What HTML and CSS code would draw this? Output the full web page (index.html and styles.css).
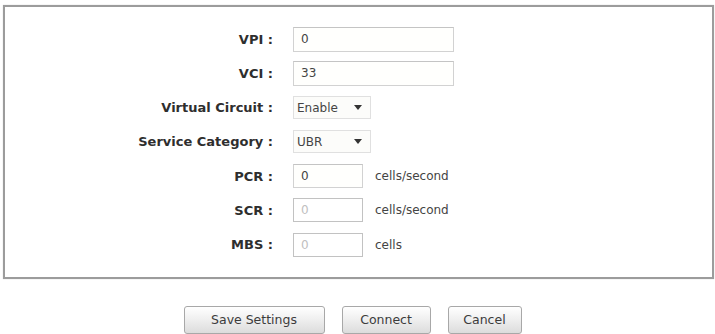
FILE: index.html
```html
<!DOCTYPE html>
<html>
<head>
<meta charset="utf-8">
<link rel="stylesheet" href="styles.css">
</head>
<body>
<div class="panel">
  <div class="form">
    <div class="label">VPI :</div>
    <div class="field"><div class="input wide">0</div></div>

    <div class="label">VCI :</div>
    <div class="field"><div class="input wide">33</div></div>

    <div class="label">Virtual Circuit :</div>
    <div class="field"><div class="select"><span>Enable</span><i class="arrow"></i></div></div>

    <div class="label">Service Category :</div>
    <div class="field"><div class="select"><span>UBR</span><i class="arrow"></i></div></div>

    <div class="label">PCR :</div>
    <div class="field"><div class="input short">0</div><span class="unit">cells/second</span></div>

    <div class="label">SCR :</div>
    <div class="field"><div class="input short disabled">0</div><span class="unit">cells/second</span></div>

    <div class="label">MBS :</div>
    <div class="field"><div class="input short disabled">0</div><span class="unit">cells</span></div>
  </div>
</div>
<div class="buttons">
  <button class="btn save">Save Settings</button>
  <button class="btn connect">Connect</button>
  <button class="btn cancel">Cancel</button>
</div>
</body>
</html>
```

FILE: styles.css
```css
html, body {
  margin: 0;
  padding: 0;
  background: #ffffff;
}

body {
  font-family: "DejaVu Sans", Verdana, sans-serif;
  font-size: 12px;
  color: #333333;
  width: 715px;
  height: 334px;
  overflow: hidden;
}

.panel {
  margin: 5px 1px 0 3px;
  border: 2px solid #9c9c9c;
  box-shadow: 0 0 1px #c8c8c8;
  padding: 15px 0 15px 0;
}

.form {
  display: grid;
  grid-template-columns: 268px 1fr;
  grid-auto-rows: 34.25px;
  column-gap: 20px;
  align-items: center;
}

.label {
  text-align: right;
  font-weight: bold;
  font-size: 13px;
  color: #2e2e2e;
  white-space: nowrap;
}

.field {
  display: flex;
  align-items: center;
  gap: 12px;
}

.input {
  box-sizing: border-box;
  height: 25px;
  border: 1px solid #d2d2d2;
  border-top-color: #c4c4c4;
  background: #fffffd;
  padding: 0 7px;
  display: flex;
  align-items: center;
  color: #444444;
  font-size: 12px;
}

.input.wide {
  width: 161px;
}

.input.short {
  width: 70px;
  height: 24px;
}

.input.disabled {
  color: #c0c0c0;
  border-color: #c2c2c2;
  background: #ffffff;
}

.select {
  box-sizing: border-box;
  width: 78px;
  height: 23px;
  border: 1px solid #e0e0e0;
  background: #fcfcfa;
  display: flex;
  align-items: center;
  justify-content: space-between;
  padding: 0 8px 0 3px;
  color: #444444;
  font-size: 12px;
}

.arrow {
  width: 0;
  height: 0;
  border-left: 4px solid transparent;
  border-right: 4px solid transparent;
  border-top: 5px solid #333333;
}

.unit {
  color: #444444;
  font-size: 12px;
}

.buttons {
  display: flex;
  justify-content: center;
  gap: 17px;
  margin-top: 27px;
  padding-right: 10px;
}

.btn {
  box-sizing: border-box;
  height: 28px;
  border: 1px solid #a8a8a8;
  border-radius: 3px;
  background: linear-gradient(#ffffff, #f0f0f0 45%, #dcdcdc);
  font-family: "DejaVu Sans", Verdana, sans-serif;
  font-size: 12.5px;
  color: #3c3c3c;
  padding: 0;
}

.btn.save {
  width: 141px;
}

.btn.connect {
  width: 89px;
}

.btn.cancel {
  width: 74px;
}
```
